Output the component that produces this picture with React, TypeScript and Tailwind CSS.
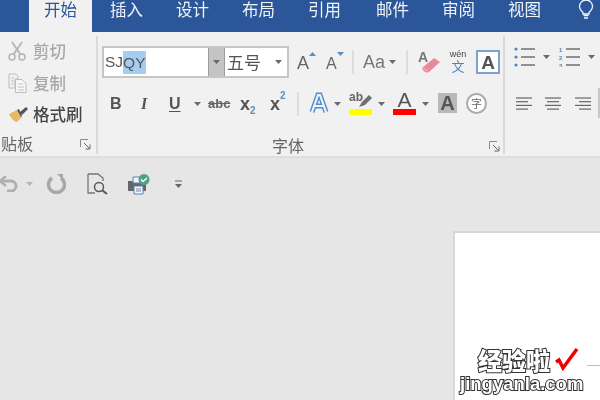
import React from "react";

const cjk = "font-['Noto_Sans_CJK_SC','Noto_Sans',sans-serif]";
const lat = "font-['Liberation_Sans','Noto_Sans_CJK_SC',sans-serif]";

function Caret({ className = "" }: { className?: string }) {
  return (
    <svg width="7" height="4" viewBox="0 0 7 4" className={"shrink-0 " + className}>
      <path d="M0 0h7L3.5 4z" fill="#6a6a6a" />
    </svg>
  );
}

function Launcher({ className = "" }: { className?: string }) {
  return (
    <svg width="11" height="11" viewBox="0 0 11 11" className={"shrink-0 " + className} fill="none">
      <path d="M.5 8V.5H8" stroke="#8a8a8a" />
      <path d="M4 4l5 5M10 5.5V10H5.5" stroke="#666" />
    </svg>
  );
}

function Tab({ label, active, className = "" }: { label: string; active?: boolean; className?: string }) {
  return (
    <div
      className={
        "h-full flex justify-center text-[16.5px] leading-[18px] shrink-0 " +
        (active ? "bg-[#f1f1f1] text-[#2b579a] " : "text-[#f0f3f8] ") +
        className
      }
    >
      {label}
    </div>
  );
}

function Bulb() {
  return (
    <svg width="16" height="20" viewBox="0 0 16 20" fill="none" className="ml-[36px] mt-0 shrink-0">
      <path d="M5 12.5C3 10.5 1.5 9 1.5 6.5a6.5 6.5 0 0 1 13 0c0 2.500-1.500 4-3.500 6v1.500H5z" stroke="#f2f5fa" strokeWidth="1.300" />
      <path d="M5.500 15.500h5M6 18h4" stroke="#f2f5fa" strokeWidth="1.500" />
    </svg>
  );
}

function Clipboard() {
  return (
    <div className="w-[96px] shrink-0 flex flex-col relative">
      <div className={"flex items-center h-[32px] mt-[3px] pl-[8px] text-[#a8a8a8] text-[16.5px] font-medium " + cjk}>
        <svg width="19" height="20" viewBox="0 0 19 20" fill="none" className="shrink-0">
          <circle cx="4" cy="16" r="3" stroke="#b5b5b5" strokeWidth="1.500" />
          <circle cx="14" cy="16" r="3" stroke="#b5b5b5" strokeWidth="1.500" />
          <path d="M5.500 13.500L14 1M12.500 13.500L4 1" stroke="#b5b5b5" strokeWidth="1.800" />
        </svg>
        <span className="ml-[6px]">剪切</span>
      </div>
      <div className={"flex items-center h-[32px] pl-[8px] text-[#a8a8a8] text-[16.5px] font-medium " + cjk}>
        <svg width="19" height="20" viewBox="0 0 19 20" fill="none" className="shrink-0">
          <path d="M1 1h7l2 2v3H7v9H1z" stroke="#bdbdbd" />
          <path d="M7.500 6.500H14l4 4v9H7.500z" stroke="#bdbdbd" fill="#f6f6f6" />
          <path d="M3 5h3M3 8h3M3 11h3M10 11h5M10 14h6M10 17h6" stroke="#c4c4c4" />
        </svg>
        <span className="ml-[6px]">复制</span>
      </div>
      <div className={"flex items-center h-[31px] pl-[9px] text-[#444] text-[16.5px] font-medium " + cjk}>
        <svg width="19" height="16" viewBox="0 0 19 16" className="shrink-0">
          <path d="M0 7l8-4 5 7-5 5C5 15 2 11 0 7z" fill="#e9b866" />
          <path d="M8 3l2-1 3 7-1 1zM11 5l6-5 2 2-6 6z" fill="#555" />
        </svg>
        <span className="ml-[5px]">格式刷</span>
      </div>
      <div className="flex items-center mt-auto h-[22px] mb-[2px]">
        <span className={"-ml-[15px] text-[16px] leading-[20px] text-[#666] " + cjk}>剪贴板</span>
        <Launcher className="ml-[47px] mt-[2px]" />
      </div>
    </div>
  );
}

function FontBoxes() {
  return (
    <div className="flex h-[32px] w-[187px] border-2 border-[#c6c6c6] bg-white shrink-0">
      <div className={"w-[104px] flex items-center pl-[1px] text-[15.500px] text-[#555] " + lat}>
        SJ<span className="bg-[#a4cdf0] h-[23px] leading-[23px]">QY</span>
      </div>
      <div className="w-[17px] bg-[#c4c4c4] border-x border-[#9c9c9c] flex items-center justify-center">
        <Caret />
      </div>
      <div className={"flex-1 flex items-center pl-[2px] text-[17px] text-[#555] " + cjk}>
        五号
        <Caret className="ml-[14px]" />
      </div>
    </div>
  );
}

function BigA({ size = 20, color = "#666", className = "" }: { size?: number; color?: string; className?: string }) {
  return (
    <span style={{ fontSize: size, color }} className={"font-bold leading-none shrink-0 " + lat + " " + className}>
      A
    </span>
  );
}

function Row1() {
  return (
    <div className="flex items-center h-[32px]">
      <FontBoxes />
      <div className="relative ml-[8px] w-[16px] h-[20px] flex items-end">
        <span className={"text-[18px] leading-none text-[#666] " + lat}>A</span>
        <svg width="7" height="4" className="absolute right-[-3px] top-[0px]"><path d="M0 4h7L3.500 0z" fill="#5b8ec4" /></svg>
      </div>
      <div className="relative ml-[13px] w-[16px] h-[20px] flex items-end">
        <span className={"text-[16px] leading-none text-[#666] " + lat}>A</span>
        <svg width="7" height="4" className="absolute right-[-2px] top-[0px]"><path d="M0 0h7L3.500 4z" fill="#5b8ec4" /></svg>
      </div>
      <div className="w-[2px] h-[24px] bg-[#dcdcdc] ml-[10px]" />
      <span className={"ml-[9px] text-[18px] text-[#777] " + lat}>Aa</span>
      <Caret className="ml-[4px]" />
      <div className="w-[2px] h-[24px] bg-[#dcdcdc] ml-[10px]" />
      <div className="relative ml-[10px] w-[22px] h-[24px]">
        <span className={"absolute left-0 top-[-2px] text-[14px] leading-[18px] font-bold text-[#777] " + lat}>A</span>
        <svg width="20" height="18" viewBox="0 0 20 18" className="absolute left-[3px] top-[6px]">
          <path d="M1 12L13 2l6 4-11 10c-2 1-5 1-7-4z" fill="#e88a9c" />
          <path d="M2 12l5 3" stroke="#f4c2cc" />
        </svg>
      </div>
      <div className="relative ml-[7px] w-[22px] h-[26px] flex flex-col items-center">
        <span className={"text-[9px] leading-[10px] text-[#444] " + lat}>wén</span>
        <span className={"text-[13px] leading-[14px] text-[#4a86c0] " + cjk}>文</span>
      </div>
      <div className="ml-[7px] w-[24px] h-[24px] border-2 border-[#7ba3cc] bg-white flex items-center justify-center">
        <BigA size={19} color="#555" />
      </div>
    </div>
  );
}

function Row2() {
  return (
    <div className={"flex items-center h-[30px] mt-[11px] text-[#555] " + lat}>
      <span className="ml-[8px] w-[12px] text-[16px] font-bold">B</span>
      <span className="ml-[19px] w-[12px] text-[16px] font-bold italic font-['Liberation_Serif',serif]">I</span>
      <span className="ml-[16px] w-[13px] text-[16px] font-bold underline underline-offset-2">U</span>
      <Caret className="ml-[12px]" />
      <span className="ml-[7px] w-[24px] text-[13px] font-bold line-through text-[#666]">abc</span>
      <span className="ml-[8px] w-[18px] text-[18px] font-bold">x<sub className="text-[10px] text-[#5b8ec4] align-[-2px]">2</sub></span>
      <span className="ml-[12px] w-[18px] text-[18px] font-bold">x<sup className="text-[10px] text-[#5b8ec4] align-[6px]">2</sup></span>
      <div className="w-[2px] h-[24px] bg-[#dcdcdc] ml-[9px] shrink-0" />
      <svg width="20" height="22" viewBox="0 0 20 22" fill="none" className="ml-[10px] mb-[2px] shrink-0">
        <path d="M3 20L9 3h2l6 17M6 14h8" stroke="#4f8bca" strokeWidth="5" />
        <path d="M3 20L9 3h2l6 17M6 14h8" stroke="#eef5fc" strokeWidth="2.200" />
      </svg>
      <Caret className="ml-[5px]" />
      <div className="relative ml-[8px] w-[23px] h-[24px] mb-[2px] shrink-0">
        <span className="absolute left-0 top-[-1px] text-[12px] leading-[14px] font-bold text-[#666]">ab</span>
        <svg width="14" height="14" viewBox="0 0 14 14" className="absolute right-0 top-[3px]">
          <path d="M1 13l3-5 7-7 3 3-7 7z" fill="#707070" />
        </svg>
        <div className="absolute left-0 right-0 bottom-0 h-[6px] bg-[#ffff00]" />
      </div>
      <Caret className="ml-[6px]" />
      <div className="ml-[8px] w-[23px] h-[24px] mb-[2px] flex flex-col items-center shrink-0">
        <span className="text-[21px] leading-[18px] text-[#555]">A</span>
        <div className="w-full h-[6px] bg-[#ff0000]" />
      </div>
      <Caret className="ml-[6px]" />
      <div className="ml-[9px] w-[19px] h-[20px] mb-[3px] bg-[#b9b9b9] flex items-center justify-center shrink-0">
        <span className="text-[20px] leading-none font-bold text-[#555]">A</span>
      </div>
      <div className={"ml-[9px] w-[21px] h-[21px] mb-[1px] rounded-full border-2 border-[#aaa] bg-white flex items-center justify-center text-[11px] leading-none text-[#666] shrink-0 " + cjk}>
        字
      </div>
    </div>
  );
}

function FontGroup() {
  return (
    <div className="w-[409px] shrink-0 flex flex-col border-x-2 border-[#dadada] pl-[4px] mt-[4px] mb-[4px] h-[118px]">
      <div className="mt-[10px]"><Row1 /></div>
      <Row2 />
      <div className="flex items-center mt-auto h-[22px] mb-[-2px]">
        <span className={"ml-[170px] text-[16px] text-[#666] " + cjk}>字体</span>
        <Launcher className="ml-[185px] mt-[2px]" />
      </div>
    </div>
  );
}

function ListIcon({ numbers }: { numbers?: boolean }) {
  const ys = [2, 10, 18];
  return (
    <svg width="21" height="20" viewBox="0 0 21 20" className="shrink-0">
      {ys.map((y, i) => (
        <g key={y}>
          {numbers ? (
            <text x="0" y={y + 3} fontSize="6" fontWeight="bold" fill="#4a86c0" fontFamily="Liberation Sans">{i + 1}</text>
          ) : (
            <circle cx="2" cy={y} r="1.600" fill="#4a86c0" />
          )}
          <path d={`M7 ${y}H21`} stroke="#666" strokeWidth="1.400" />
        </g>
      ))}
    </svg>
  );
}

function AlignIcon({ kind, className = "" }: { kind: "l" | "c" | "r"; className?: string }) {
  const w = [16, 12, 16, 12];
  return (
    <svg width="17" height="13" viewBox="0 0 17 13" className={"shrink-0 " + className}>
      {w.map((n, i) => {
        const x = kind === "l" ? 0 : kind === "c" ? (16 - n) / 2 : 16 - n;
        return <path key={i} d={`M${x} ${1 + i * 3.700}h${n}`} stroke="#666" strokeWidth="1.200" />;
      })}
    </svg>
  );
}

function Paragraph() {
  return (
    <div className="flex-1 flex flex-col pl-[9px] pt-[14px]">
      <div className="flex items-center h-[22px]">
        <ListIcon />
        <Caret className="ml-[8px]" />
        <div className="ml-[9px]"><ListIcon numbers /></div>
        <Caret className="ml-[8px]" />
      </div>
      <div className="flex items-center mt-[20px]">
        <AlignIcon kind="l" className="ml-[2px]" />
        <AlignIcon kind="c" className="ml-[12px]" />
        <AlignIcon kind="r" className="ml-[13px]" />
        <div className="w-[3px] h-[30px] bg-[#c8c8c8] ml-[6px]" />
      </div>
    </div>
  );
}

function QuickBar() {
  return (
    <div className="flex items-center h-[36px] mt-[8px] shrink-0">
      <svg width="18" height="16" viewBox="0 0 18 16" fill="none" className="shrink-0">
        <path d="M1 5h10a5 5 0 0 1 0 10H7" stroke="#b0b0b0" strokeWidth="3" />
        <path d="M6 0L0 5l6 5" stroke="#b0b0b0" strokeWidth="2.500" />
      </svg>
      <Caret className="ml-[8px] opacity-40" />
      <svg width="20" height="20" viewBox="0 0 20 20" fill="none" className="ml-[13px] shrink-0">
        <path d="M6 4a8 8 0 1 0 9 0" stroke="#a8a8a8" strokeWidth="3.500" />
        <path d="M11 0h6v6z" fill="#a8a8a8" />
      </svg>
      <svg width="22" height="22" viewBox="0 0 22 22" fill="none" className="ml-[21px] shrink-0">
        <path d="M1 1h10l5 4v3M1 1v19h7" stroke="#777" strokeWidth="1.300" />
        <circle cx="12" cy="14" r="4.500" stroke="#555" strokeWidth="1.500" />
        <path d="M15.500 17.500L20 21" stroke="#555" strokeWidth="2" />
      </svg>
      <svg width="23" height="21" viewBox="0 0 23 21" className="ml-[19px] shrink-0">
        <path d="M0 7h18v10H0z" fill="#666" />
        <path d="M5 3h7v6H5zM6 12h9v8H6z" fill="#f4f4f4" stroke="#4a86c0" />
        <path d="M8 15h5M8 17h5" stroke="#888" />
        <circle cx="16" cy="5.500" r="5.500" fill="#4fa183" />
        <path d="M13 5.500l2 2 4-3.500" stroke="#fff" strokeWidth="1.300" fill="none" />
      </svg>
      <svg width="8" height="9" viewBox="0 0 8 9" className="ml-[24px] shrink-0">
        <path d="M0 1h7" stroke="#666" />
        <path d="M0 4h7L3.500 8z" fill="#666" />
      </svg>
    </div>
  );
}

function Watermark() {
  return (
    <div className="absolute left-[478px] top-[347px] w-[122px] h-[50px] pointer-events-none">
      <div
        className={"absolute left-0 top-[-2px] text-[24px] leading-[30px] font-black text-white [-webkit-text-stroke:2px_#333] [paint-order:stroke_fill] " + cjk}
      >
        经验啦
      </div>
      <svg width="26" height="26" viewBox="0 0 26 26" className="absolute left-[76px] top-[1px]" fill="none">
        <path d="M2 14l3-2 4 8L23 1" stroke="#f00000" strokeWidth="3.500" />
      </svg>
      <div
        className={"absolute left-[-18px] top-[26px] text-[18.500px] leading-[22px] font-bold text-white [-webkit-text-stroke:2px_#333] [paint-order:stroke_fill] " + lat}
      >
        jingyanla.com
      </div>
    </div>
  );
}

export default function App() {
  return (
    <div className={"relative w-[600px] h-[400px] overflow-hidden bg-[#e6e6e6] flex flex-col blur-[0.4px] " + cjk}>
      <div className="flex h-[32px] bg-[#2b579a] shrink-0 overflow-hidden">
        <Tab label="开始" active className="ml-[29px] w-[63px]" />
        <Tab label="插入" className="ml-[17px] w-[35px]" />
        <Tab label="设计" className="ml-[31px] w-[35px]" />
        <Tab label="布局" className="ml-[31px] w-[35px]" />
        <Tab label="引用" className="ml-[31px] w-[35px]" />
        <Tab label="邮件" className="ml-[33px] w-[35px]" />
        <Tab label="审阅" className="ml-[31px] w-[35px]" />
        <Tab label="视图" className="ml-[31px] w-[35px]" />
        <Bulb />
      </div>
      <div className="flex h-[126px] bg-[#f1f1f1] border-b-2 border-[#dedede] shrink-0 overflow-hidden">
        <Clipboard />
        <FontGroup />
        <Paragraph />
      </div>
      <QuickBar />
      <div className="flex justify-end flex-1 pt-[29px]">
        <div className="w-[147px] bg-white border-l-2 border-t-2 border-[#d8d8d8] flex flex-col">
          <div className="h-[1px] w-[13px] bg-[#bdbdbd] ml-auto mt-[132px]" />
        </div>
      </div>
      <Watermark />
    </div>
  );
}
